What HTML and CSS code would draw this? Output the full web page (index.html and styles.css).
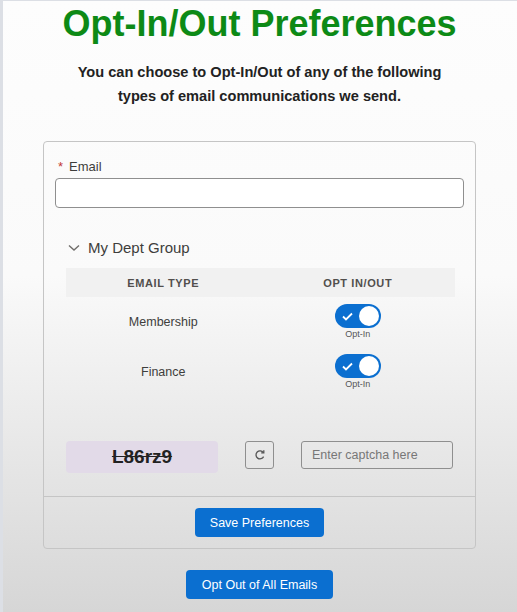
FILE: index.html
```html
<!DOCTYPE html>
<html lang="en">
<head>
    <meta charset="UTF-8">
    <meta name="viewport" content="width=device-width, initial-scale=1.0">
    <title>Opt-In/Out Preferences</title>
    <link rel="stylesheet" href="styles.css">
</head>
<body>
    <div class="page">
        <h1 class="title">Opt-In/Out Preferences</h1>
        <p class="intro">You can choose to Opt-In/Out of any of the following<br>types of email communications we send.</p>

        <div class="card">
            <div class="card-body">
                <label class="field-label" for="email"><span class="required">*</span>Email</label>
                <input class="field-input" type="email" id="email" name="email">

                <div class="group">
                    <div class="group-title">
                        <svg class="chevron" width="12" height="8" viewBox="0 0 12 8"><path d="M1 1.5 L6 6 L11 1.5" fill="none" stroke="#706e6b" stroke-width="1.4"/></svg>
                        My Dept Group
                    </div>
                    <table class="pref-table">
                        <thead>
                            <tr>
                                <th>Email Type</th>
                                <th>Opt In/Out</th>
                            </tr>
                        </thead>
                        <tbody>
                            <tr>
                                <td>Membership</td>
                                <td>
                                    <span class="toggle">
                                        <svg class="check" width="11" height="9" viewBox="0 0 11 9"><path d="M1 4.5 L4 7.5 L10 1.5" fill="none" stroke="#fff" stroke-width="1.8"/></svg>
                                        <span class="knob"></span>
                                    </span>
                                    <span class="toggle-label">Opt-In</span>
                                </td>
                            </tr>
                            <tr>
                                <td>Finance</td>
                                <td>
                                    <span class="toggle">
                                        <svg class="check" width="11" height="9" viewBox="0 0 11 9"><path d="M1 4.5 L4 7.5 L10 1.5" fill="none" stroke="#fff" stroke-width="1.8"/></svg>
                                        <span class="knob"></span>
                                    </span>
                                    <span class="toggle-label">Opt-In</span>
                                </td>
                            </tr>
                        </tbody>
                    </table>
                </div>

                <div class="captcha-row">
                    <div class="captcha">L86rz9</div>
                    <button class="refresh" type="button">
                        <svg width="12" height="12" viewBox="0 0 12 12"><path d="M9.3 3.6 A4 4 0 1 0 9.6 7.6" fill="none" stroke="#555" stroke-width="1.3"/><path d="M7.2 3.9 L9.8 3.9 L9.8 1.2" fill="none" stroke="#555" stroke-width="1.3"/></svg>
                    </button>
                    <input class="captcha-input" type="text" placeholder="Enter captcha here">
                </div>
            </div>
            <div class="card-footer">
                <button class="btn" type="button">Save Preferences</button>
            </div>
        </div>

        <button class="btn btn-wide" type="button">Opt Out of All Emails</button>
    </div>
</body>
</html>
```

FILE: styles.css
```css
body {
    margin: 0;
    font-family: "Liberation Sans", Arial, sans-serif;
    color: #3e3e3c;
    background: linear-gradient(#fdfdfd 0%, #fafafa 45%, #d6d6d6 100%);
    min-height: 612px;
}
.page {
    display: flex;
    flex-direction: column;
    align-items: center;
    min-height: 612px;
    padding-left: 2px;
    box-shadow: inset 3px 1px 0 #dcdfe5;
}
.title {
    margin: 4px 0 0;
    font-size: 36px;
    line-height: 40px;
    color: #0d8a16;
    font-weight: bold;
}
.intro {
    margin: 16px 0 0;
    font-size: 14.6px;
    line-height: 24px;
    font-weight: bold;
    text-align: center;
    color: #222;
}
.card {
    margin-top: 33px;
    width: 433px;
    box-sizing: border-box;
    border: 1px solid #c5c5c5;
    border-radius: 4px;
}
.card-body {
    padding: 16px 11px 23px 11px;
}
.field-label {
    display: block;
    font-size: 13px;
    line-height: 18px;
    margin-bottom: 2px;
}
.required {
    color: #c23934;
    margin: 0 6px 0 3px;
}
.field-input {
    display: block;
    width: 100%;
    height: 30px;
    box-sizing: border-box;
    border: 1px solid #8f8f8f;
    border-radius: 4px;
    background: #fff;
}
.group {
    margin-top: 30px;
    padding: 0 9px 0 11px;
}
.group-title {
    display: flex;
    align-items: center;
    gap: 8px;
    font-size: 15px;
    line-height: 20px;
    padding-left: 2px;
}
.pref-table {
    width: 100%;
    margin-top: 10px;
    border-collapse: collapse;
    table-layout: fixed;
}
.pref-table th {
    background: #f1f1f1;
    height: 29px;
    padding: 0;
    font-size: 11px;
    font-weight: bold;
    letter-spacing: 0.6px;
    text-transform: uppercase;
    color: #514f4d;
}
.pref-table td {
    height: 50px;
    padding: 0;
    text-align: center;
    vertical-align: middle;
    font-size: 12.5px;
}
.pref-table td:last-child {
    vertical-align: top;
    padding-top: 7px;
    height: 43px;
}
.toggle {
    display: inline-flex;
    align-items: center;
    justify-content: space-between;
    width: 46px;
    height: 24px;
    box-sizing: border-box;
    padding: 0 2px 0 7px;
    border-radius: 12px;
    background: #0b6fd0;
}
.knob {
    width: 20px;
    height: 20px;
    border-radius: 50%;
    background: #fff;
}
.toggle-label {
    display: block;
    font-size: 9px;
    line-height: 12px;
    color: #555;
}
.captcha-row {
    display: flex;
    justify-content: space-between;
    align-items: flex-start;
    margin-top: 44px;
    padding: 0 11px;
}
.captcha {
    width: 152px;
    height: 32px;
    line-height: 32px;
    border-radius: 4px;
    background: #e2dae8;
    text-align: center;
    font-size: 19px;
    font-weight: bold;
    color: #222;
    text-decoration: line-through;
}
.refresh {
    width: 29px;
    height: 28px;
    padding: 0;
    display: flex;
    align-items: center;
    justify-content: center;
    border: 1px solid #8f8f8f;
    border-radius: 3px;
    background: transparent;
}
.captcha-input {
    width: 152px;
    height: 28px;
    box-sizing: border-box;
    padding: 0 10px;
    border: 1px solid #8f8f8f;
    border-radius: 3px;
    background: transparent;
    font-family: "Liberation Sans", Arial, sans-serif;
    font-size: 12.5px;
}
.captcha-input::placeholder {
    color: #777;
}
.card-footer {
    border-top: 1px solid #c5c5c5;
    padding: 11px 0 11px;
    display: flex;
    justify-content: center;
}
.btn {
    height: 29px;
    padding: 0 15px;
    border: none;
    border-radius: 4px;
    background: #0b6fd0;
    color: #fff;
    font-family: "Liberation Sans", Arial, sans-serif;
    font-size: 12.5px;
    cursor: pointer;
}
.btn-wide {
    margin-top: 21px;
    padding: 0 16px;
}
```
